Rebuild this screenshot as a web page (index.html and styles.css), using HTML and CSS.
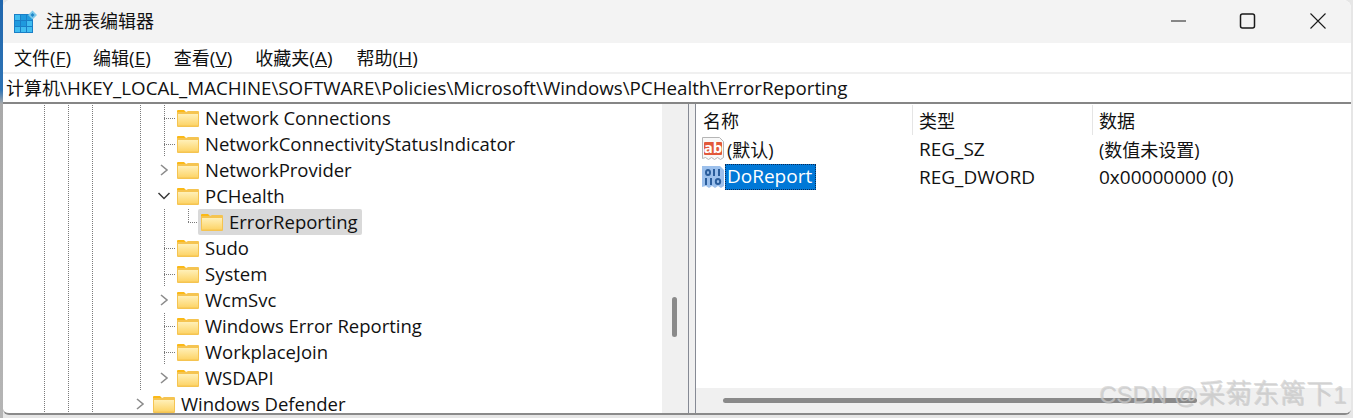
FILE: index.html
```html
<!DOCTYPE html>
<html lang="zh-CN">
<head>
<meta charset="utf-8">
<title>注册表编辑器</title>
<link rel="stylesheet" href="styles.css">
</head>
<body>
<svg class="defs" width="0" height="0" aria-hidden="true">
  <defs>
    <linearGradient id="fg" x1="0" y1="0" x2="0" y2="1"><stop offset="0" stop-color="#fff0b8"/><stop offset="1" stop-color="#fdd468"/></linearGradient>
    <symbol id="folder" viewBox="0 0 22 18">
      <path d="M0 2a1 1 0 0 1 1-1h6l2 2h-9z" fill="#fbb917"/>
      <path d="M0 3h9l2-1h10a1 1 0 0 1 1 1v14a1 1 0 0 1-1 1H1a1 1 0 0 1-1-1z" fill="#f5c451"/>
      <path d="M1 5h20v11.500H1z" fill="url(#fg)"/>
    </symbol>
    <symbol id="chev" viewBox="0 0 12 14"><path d="M3 2l6 5-6 5" fill="none" stroke="#8c8c8c" stroke-width="1.600"/></symbol>
    <symbol id="chevd" viewBox="0 0 14 12"><path d="M1.500 3l5.500 5.500L12.500 3" fill="none" stroke="#3a3a3a" stroke-width="1.500"/></symbol>
  </defs>
</svg>
<div class="window">
  <header class="titlebar">
    <svg class="appicon" width="24" height="24" viewBox="0 0 24 24">
      <rect x="0" y="4" width="19" height="19" fill="#1a7fc7"/>
      <g fill="#40bdf0"><rect x="1" y="5" width="5" height="5"/><rect x="13" y="11" width="5" height="5"/><rect x="1" y="17" width="5" height="5"/><rect x="7" y="17" width="5" height="5"/><rect x="13" y="17" width="5" height="5"/></g>
      <g fill="#1f9ade"><rect x="7" y="5" width="5" height="5"/><rect x="13" y="5" width="5" height="5"/><rect x="1" y="11" width="5" height="5"/><rect x="7" y="11" width="5" height="5"/></g>
      <path d="M18.500 0.500l4.500 4.500-4.500 4.500-4.500-4.500z" fill="#7cc8ea"/><path d="M18.500 3l2 2-2 2-2-2z" fill="#1f86c9"/>
    </svg>
    <span class="apptitle">注册表编辑器</span>
    <div class="wincontrols">
      <svg class="wc" width="46" height="16" viewBox="0 0 46 16"><path d="M16 8h15" stroke="#1a1a1a" stroke-width="1"/></svg>
      <svg class="wc" width="46" height="16" viewBox="0 0 46 16"><rect x="16.500" y="1" width="14" height="14" rx="2" fill="none" stroke="#1a1a1a" stroke-width="1.500"/></svg>
      <svg class="wc wclose" width="46" height="16" viewBox="0 0 46 16"><path d="M15.500 .5l15 15M30.500 .5l-15 15" stroke="#1a1a1a" stroke-width="1.100"/></svg>
    </div>
  </header>
  <nav class="menubar">
    <span class="m1"><span class="cjk">文件</span>(<u>F</u>)</span>
    <span class="m2"><span class="cjk">编辑</span>(<u>E</u>)</span>
    <span class="m3"><span class="cjk">查看</span>(<u>V</u>)</span>
    <span class="m4"><span class="cjk">收藏夹</span>(<u>A</u>)</span>
    <span class="m5"><span class="cjk">帮助</span>(<u>H</u>)</span>
  </nav>
  <div class="address"><span class="cjk">计算机</span>\HKEY_LOCAL_MACHINE\SOFTWARE\Policies\Microsoft\Windows\PCHealth\ErrorReporting</div>
  <main class="panes">
    <section class="treepane">
      <div class="tree">
        <div class="row"><i class="g"></i><i class="g"></i><i class="g"></i><i></i><i class="g"></i><i class="t"></i><svg class="fo"><use href="#folder"/></svg><span class="lbl">Network Connections</span></div>
        <div class="row"><i class="g"></i><i class="g"></i><i class="g"></i><i></i><i class="g"></i><i class="t"></i><svg class="fo"><use href="#folder"/></svg><span class="lbl">NetworkConnectivityStatusIndicator</span></div>
        <div class="row"><i class="g"></i><i class="g"></i><i class="g"></i><i></i><i class="g"></i><i class="c"><svg class="ch"><use href="#chev"/></svg></i><svg class="fo"><use href="#folder"/></svg><span class="lbl">NetworkProvider</span></div>
        <div class="row"><i class="g"></i><i class="g"></i><i class="g"></i><i></i><i class="g"></i><i class="c"><svg class="chd"><use href="#chevd"/></svg></i><svg class="fo"><use href="#folder"/></svg><span class="lbl">PCHealth</span></div>
        <div class="row"><i class="g"></i><i class="g"></i><i class="g"></i><i></i><i class="g"></i><i class="g"></i><i class="l"></i><span class="sel"><svg class="fo"><use href="#folder"/></svg><span class="lbl">ErrorReporting</span></span></div>
        <div class="row"><i class="g"></i><i class="g"></i><i class="g"></i><i></i><i class="g"></i><i class="t"></i><svg class="fo"><use href="#folder"/></svg><span class="lbl">Sudo</span></div>
        <div class="row"><i class="g"></i><i class="g"></i><i class="g"></i><i></i><i class="g"></i><i class="t"></i><svg class="fo"><use href="#folder"/></svg><span class="lbl">System</span></div>
        <div class="row"><i class="g"></i><i class="g"></i><i class="g"></i><i></i><i class="g"></i><i class="c"><svg class="ch"><use href="#chev"/></svg></i><svg class="fo"><use href="#folder"/></svg><span class="lbl">WcmSvc</span></div>
        <div class="row"><i class="g"></i><i class="g"></i><i class="g"></i><i></i><i class="g"></i><i class="t"></i><svg class="fo"><use href="#folder"/></svg><span class="lbl">Windows Error Reporting</span></div>
        <div class="row"><i class="g"></i><i class="g"></i><i class="g"></i><i></i><i class="g"></i><i class="t"></i><svg class="fo"><use href="#folder"/></svg><span class="lbl">WorkplaceJoin</span></div>
        <div class="row"><i class="g"></i><i class="g"></i><i class="g"></i><i></i><i class="g"></i><i class="c"><svg class="ch"><use href="#chev"/></svg></i><svg class="fo"><use href="#folder"/></svg><span class="lbl">WSDAPI</span></div>
        <div class="row"><i class="g"></i><i class="g"></i><i class="g"></i><i></i><i class="c"><svg class="ch"><use href="#chev"/></svg></i><svg class="fo"><use href="#folder"/></svg><span class="lbl">Windows Defender</span></div>
      </div>
      <div class="vscroll"><div class="vthumb"></div></div>
    </section>
    <div class="splitter"></div>
    <section class="listpane">
      <div class="listbody">
        <div class="lhead"><span class="c1 cjk">名称</span><span class="c2 cjk">类型</span><span class="c3 cjk">数据</span></div>
        <div class="lrow lfirst">
          <span class="c1">
            <svg class="valicon" width="24" height="24" viewBox="0 0 24 24">
              <path d="M1.500 .5h17l4 4v16l-3 2-3-2-3 2-3-2-3 2-3-2-3 1z" fill="#f8f8f8" stroke="#b5b5b5"/>
              <rect x="3" y="5" width="18" height="13" rx="1" fill="#e2593a"/>
              <text class="abtxt" x="12" y="16" text-anchor="middle">ab</text>
            </svg>
            <span class="lname cjk">(默认)</span>
          </span>
          <span class="c2">REG_SZ</span><span class="c3 cjk">(数值未设置)</span>
        </div>
        <div class="lrow">
          <span class="c1">
            <svg class="valicon" width="24" height="24" viewBox="0 0 24 24">
              <path d="M1 1h18l4 4v16l-3 2-3-2-3 2-3-2-3 2-3-2-4 1z" fill="#9cc0ec"/>
              <g fill="#2a5d9c"><rect x="12" y="4" width="2" height="7"/><rect x="17" y="4" width="2" height="7"/><rect x="4" y="13" width="2" height="7"/><rect x="9" y="13" width="2" height="7"/></g>
              <g fill="none" stroke="#2a5d9c" stroke-width="2"><ellipse cx="7" cy="7.500" rx="2" ry="2.500"/><ellipse cx="17" cy="16.500" rx="2.200" ry="2.500"/></g>
            </svg>
            <span class="lname lsel">DoReport</span>
          </span>
          <span class="c2">REG_DWORD</span><span class="c3">0x00000000 (0)</span>
        </div>
      </div>
      <div class="hscroll"><div class="hthumb"></div></div>
    </section>
  </main>
</div>
<div class="watermark">CSDN @<span class="wmcjk">采菊东篱下</span>1</div>
</body>
</html>
```

FILE: styles.css
```css
* { box-sizing: border-box; }
html, body { margin: 0; height: 100%; }
body {
  position: relative;
  width: 1353px;
  height: 418px;
  overflow: hidden;
  background:
    linear-gradient(#1f66ad 0, #2f74b5 90px, #a9a9a9 104px, #b5b5b5 100%) 0 0 / 3px 100% no-repeat,
    #e6e6e6;
  padding: 0 2px 3px 3px;
  font-family: "Open Sans", "Noto Sans CJK SC", sans-serif;
  font-size: 18.5px;
  color: #111;
}
.cjk { font-size: 18px; }
.defs { display: block; height: 0; }
.window {
  height: 415px;
  display: flex;
  flex-direction: column;
  background: #fff;
  border-radius: 8px 8px 6px 6px;
  border-bottom: 2px solid #8a8a8a;
  overflow: hidden;
}
.titlebar {
  height: 43px;
  flex: none;
  display: flex;
  align-items: center;
  background: #f3f3f3;
  padding-left: 11px;
}
.appicon { flex: none; margin-top: 0; }
.apptitle { margin-left: 8px; font-size: 18px; margin-top: -3px; }
.wincontrols { margin-left: auto; display: flex; margin-right: 10px; margin-top: -2px; }
.wc { margin-left: 23px; }
.wclose { margin-left: 25px; }
.menubar {
  height: 29px;
  flex: none;
  display: flex;
  align-items: center;
  background: #fff;
  padding-left: 11px;
  font-size: 19px;
}
.menubar span { white-space: nowrap; }
.m2 { margin-left: 22px; }
.m3 { margin-left: 23px; }
.m4 { margin-left: 23px; }
.m5 { margin-left: 24px; }
.address {
  height: 30px;
  flex: none;
  border-top: 2px solid #f0f0f0;
  padding-left: 3px;
  line-height: 28px;
  font-size: 18.75px;
  white-space: nowrap;
  background: #fff;
}
.panes {
  flex: 1;
  min-height: 0;
  display: flex;
  border-top: 2px solid #868686;
}
.treepane { width: 685px; display: flex; flex: none; min-height: 0; }
.tree { width: 659px; flex: none; overflow: hidden; padding: 1px 0 0 29px; }
.row { height: 26px; display: flex; align-items: center; }
.row i {
  flex: none;
  width: 24px;
  height: 26px;
  display: flex;
  align-items: center;
  justify-content: center;
}
.g { background: repeating-linear-gradient(#7a7a7a 0 1px, transparent 1px 2px) 12px 0 / 1px 100% no-repeat; }
.t {
  background:
    repeating-linear-gradient(to right, #7a7a7a 0 1px, transparent 1px 2px) 12px 13px / 12px 1px no-repeat,
    repeating-linear-gradient(#7a7a7a 0 1px, transparent 1px 2px) 12px 0 / 1px 100% no-repeat;
}
.ch { width: 12px; height: 14px; }
.chd { width: 14px; height: 12px; }
.l {
  background:
    repeating-linear-gradient(to right, #7a7a7a 0 1px, transparent 1px 2px) 12px 13px / 12px 1px no-repeat,
    repeating-linear-gradient(#7a7a7a 0 1px, transparent 1px 2px) 12px 0 / 1px 13px no-repeat;
}
.fo { width: 22px; height: 18px; flex: none; margin-left: 1px; }
.lbl { margin: -1px 0 0 6px; white-space: nowrap; line-height: 18px; }
.sel {
  display: flex;
  align-items: center;
  height: 26px;
  margin-left: -2px;
  padding: 0 4px 0 2px;
  background: #d9d9d9;
  border-radius: 2px;
}
.vscroll { flex: 1; background: #f0f0f0; padding: 193px 0 0 10px; }
.vthumb { width: 5px; height: 40px; background: #8a8a8a; border-radius: 3px; }
.splitter {
  width: 8px;
  flex: none;
  background: #f0f0f0;
  border-left: 1px solid #868a94;
  border-right: 1px solid #868a94;
}
.listpane { flex: 1; min-width: 0; display: flex; flex-direction: column; font-size: 19px; }
.listbody { flex: 1; min-height: 0; }
.lhead { height: 31px; display: flex; align-items: center; }
.lhead span { height: 30px; display: flex; align-items: center; }
.lhead .c1 { padding-left: 7px; }
.lhead .c2, .lhead .c3 { border-left: 1px solid #e5e5e5; padding-left: 6px; }
.c1 { width: 216px; flex: none; padding-left: 6px; display: flex; align-items: center; white-space: nowrap; }
.c2 { width: 180px; flex: none; padding-left: 7px; white-space: nowrap; }
.c3 { flex: 1; padding-left: 7px; white-space: nowrap; }
.lrow { height: 28px; display: flex; align-items: center; }
.lfirst { height: 27px; margin-bottom: 1px; }
.valicon { flex: none; margin-left: -1px; }
.lname { margin-left: 0; padding: 0 2px; }
.lsel { background: #0078d7; color: #fff; outline: 1px dotted #0a2a55; outline-offset: -1px; height: 26px; line-height: 25px; padding: 0 4px 0 2px; }
.abtxt { font: bold 15px "Open Sans", sans-serif; fill: #fff; }
.hscroll { height: 25px; flex: none; background: #f0f0f0; padding: 10px 0 0 27px; }
.hthumb { width: 474px; height: 5px; background: #8a8a8a; border-radius: 3px; }
.watermark {
  position: absolute;
  left: 1099px;
  top: 372px;
  font-size: 24px;
  white-space: nowrap;
  color: rgba(205,205,205,.7);
  text-shadow: 1px 1px 0 rgba(140,140,140,.3);
  font-family: "Liberation Sans", "Noto Sans CJK SC", sans-serif;
}
.wmcjk { font-size: 27px; }
```
